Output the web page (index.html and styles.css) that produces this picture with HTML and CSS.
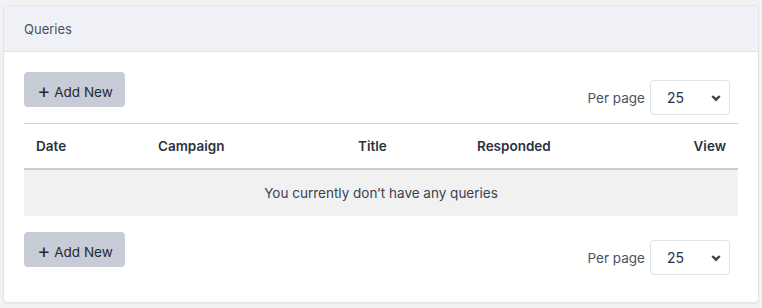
FILE: index.html
```html
<!DOCTYPE html>
<html lang="en">
<head>
  <meta charset="UTF-8" />
  <title>Queries</title>
  <link rel="stylesheet" href="styles.css">
</head>
<body>
  <div class="card">
    <div class="card-header">Queries</div>
    <div class="card-body">
      <div class="toolbar">
        <button class="btn-add"><span class="plus">+</span> Add New</button>
        <div class="per-page">
          <label for="perPageTop">Per page</label>
          <div class="select-wrap">
            <select id="perPageTop">
              <option>10</option>
              <option selected>25</option>
              <option>50</option>
            </select>
            <svg class="chev" viewBox="0 0 10 10"><path d="M1.3 3L5 6.7 8.7 3" fill="none" stroke="currentColor" stroke-width="2.4"/></svg>
          </div>
        </div>
      </div>

      <table class="queries">
        <thead>
          <tr>
            <th class="c-date">Date</th>
            <th class="c-campaign">Campaign</th>
            <th class="c-title">Title</th>
            <th class="c-resp">Responded</th>
            <th class="c-view">View</th>
          </tr>
        </thead>
        <tbody>
          <tr class="empty">
            <td colspan="5">You currently don’t have any queries</td>
          </tr>
        </tbody>
      </table>

      <div class="toolbar bottom">
        <button class="btn-add"><span class="plus">+</span> Add New</button>
        <div class="per-page">
          <label for="perPageBottom">Per page</label>
          <div class="select-wrap">
            <select id="perPageBottom">
              <option>10</option>
              <option selected>25</option>
              <option>50</option>
            </select>
            <svg class="chev" viewBox="0 0 10 10"><path d="M1.3 3L5 6.7 8.7 3" fill="none" stroke="currentColor" stroke-width="2.4"/></svg>
          </div>
        </div>
      </div>
    </div>
  </div>
</body>
</html>
```

FILE: styles.css
```css
body {
  margin: 0;
  padding: 5px 3px;
  background: #f2f2f3;
  font-family: Inter, 'Noto Sans', sans-serif;
  font-size: 13.5px;
  color: #2b3240;
}

.card {
  background: #fff;
  border: 1px solid #e3e4ea;
  border-radius: 4px;
  box-shadow: 0 1px 1px rgba(0, 0, 0, 0.04);
  box-sizing: border-box;
  height: 298px;
}

.card-header {
  background: #eff1f6;
  border-bottom: 1px solid #dfe1e8;
  padding: 0 20px;
  height: 45px;
  line-height: 46px;
  color: #4a5264;
  font-size: 13px;
}

.card-body {
  padding: 20px 20px 0;
}

.toolbar {
  display: flex;
  justify-content: space-between;
  align-items: flex-start;
}

.toolbar.bottom {
  margin-top: 16px;
}

.btn-add {
  font-family: inherit;
  font-size: 13.5px;
  color: #232936;
  background: #c8ccd6;
  border: none;
  border-radius: 4px;
  height: 35px;
  width: 101px;
  padding: 0 0 0 1px;
  cursor: pointer;
}

.btn-add .plus {
  font-size: 20px;
  font-weight: 400;
  line-height: 1;
  position: relative;
  top: 1px;
}

.per-page {
  display: flex;
  align-items: center;
  gap: 5px;
  margin-top: 8px;
  margin-right: 8px;
  color: #4a5264;
}

.select-wrap {
  position: relative;
}

.select-wrap select {
  appearance: none;
  -webkit-appearance: none;
  font-family: inherit;
  font-size: 14px;
  color: #2b3240;
  background: #fff;
  border: 1px solid #e2e3e9;
  border-radius: 4px;
  width: 80px;
  height: 35px;
  padding: 0 0 0 16px;
}

.select-wrap .chev {
  position: absolute;
  right: 9px;
  top: 13px;
  width: 10px;
  height: 10px;
  color: #3a4150;
  pointer-events: none;
}

.queries {
  width: 100%;
  border-collapse: collapse;
  margin-top: 8px;
  border-top: 1px solid #cdd0d8;
}

.queries th {
  text-align: left;
  font-weight: 600;
  height: 44px;
  padding: 0 12px;
  border-bottom: 2px solid #c9ccd6;
  color: #2b3240;
}

.c-date { width: 98px; }
.c-campaign { width: 176px; }
.c-title { width: 95px; }
.queries th.c-view { text-align: right; }

.empty td {
  background: #f1f1f1;
  text-align: center;
  height: 44px;
  color: #3b4252;
}
```
